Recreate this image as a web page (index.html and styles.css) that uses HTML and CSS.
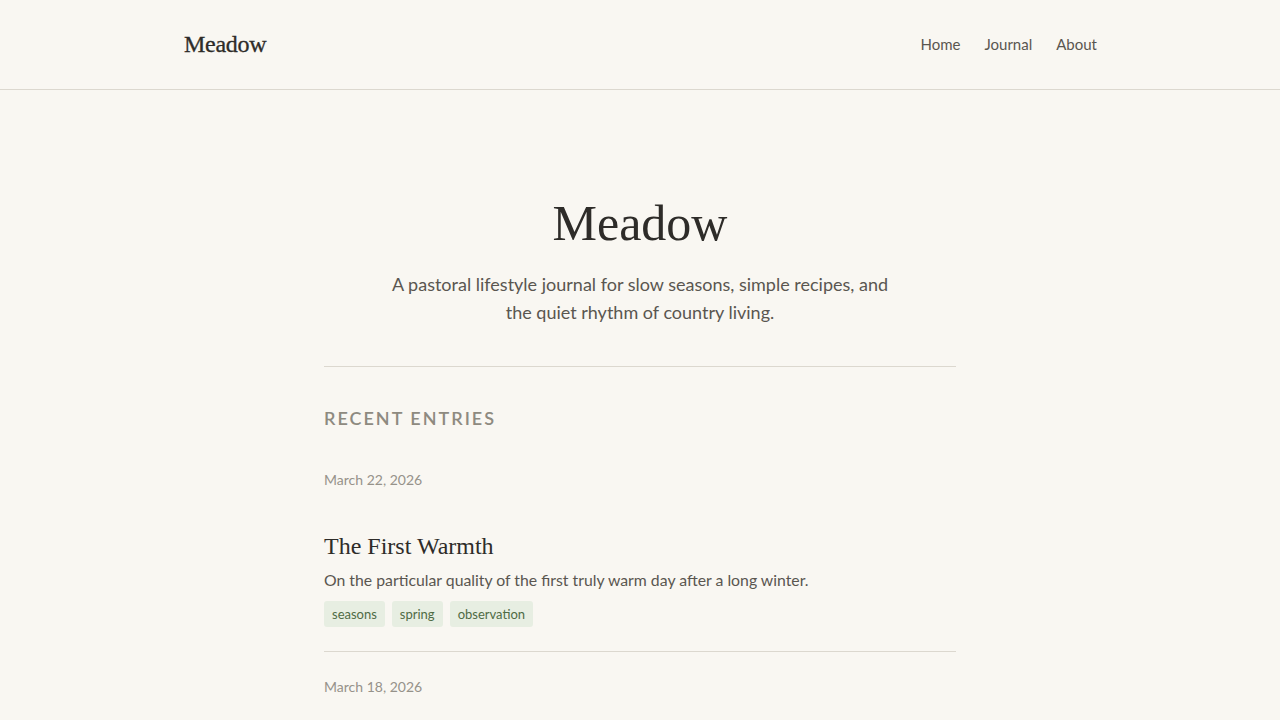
FILE: index.html
```html
<!DOCTYPE html>
<html lang="en">
<head>
    <meta charset="UTF-8">
    <meta name="viewport" content="width=device-width, initial-scale=1.0">
    <link rel="stylesheet" href="styles.css">
    <title>Meadow</title>
</head>
<body>
    <header class="site-header">
        <div class="header-inner">
            <a class="logo" href="#">Meadow</a>
            <nav class="nav">
                <a href="#">Home</a>
                <a href="#">Journal</a>
                <a href="#">About</a>
            </nav>
        </div>
    </header>
    <main class="content">
        <section class="hero">
            <h1>Meadow</h1>
            <p>A pastoral lifestyle journal for slow seasons, simple recipes, and the quiet rhythm of country living.</p>
        </section>
        <section class="entries">
            <h2>Recent Entries</h2>
            <article class="entry">
                <div class="date">March 22, 2026</div>
                <h3>The First Warmth</h3>
                <p>On the particular quality of the first truly warm day after a long winter.</p>
                <div class="tags">
                    <span class="tag">seasons</span>
                    <span class="tag">spring</span>
                    <span class="tag">observation</span>
                </div>
            </article>
            <article class="entry">
                <div class="date">March 18, 2026</div>
            </article>
        </section>
    </main>
</body>
</html>
```

FILE: styles.css
```css
body{
    margin: 0;
    background: #f9f7f2;
    color: #2e2c29;
    font-family: "Lato", "Noto Sans", sans-serif;
}
a{
    color: inherit;
    text-decoration: none;
}
.site-header{
    border-bottom: 1px solid #dcd8cf;
}
.header-inner{
    max-width: 912px;
    margin: 0 auto;
    height: 89px;
    display: flex;
    align-items: center;
    justify-content: space-between;
}
.logo{
    font-family: "Liberation Serif", serif;
    font-size: 24px;
    font-weight: 400;
    letter-spacing: -0.3px;
    color: #2e2c29;
    -webkit-text-stroke: 0.3px #2e2c29;
}
.nav{
    display: flex;
    gap: 24px;
    margin-right: -1px;
    margin-top: -2px;
}
.nav a{
    font-size: 15px;
    color: #5a5650;
}
.content{
    max-width: 632px;
    margin: 0 auto;
}
.hero{
    text-align: center;
    padding: 100px 0 40px;
    border-bottom: 1px solid #dcd8cf;
}
.hero h1{
    margin: 0;
    font-family: "Liberation Serif", serif;
    font-weight: 400;
    font-size: 50px;
    line-height: 67px;
    color: #2e2c29;
}
.hero p{
    margin: 13px auto 0;
    max-width: 510px;
    font-size: 18px;
    line-height: 28px;
    color: #5a5650;
}
.entries h2{
    margin: 39px 0 15px;
    font-size: 18px;
    line-height: 24px;
    font-weight: 600;
    text-transform: uppercase;
    letter-spacing: 2px;
    color: #8e8a80;
}
.entry{
    padding: 25px 0 24px;
    border-bottom: 1px solid #dcd8cf;
}
.entry:last-child{
    border-bottom: none;
}
.entry .date{
    font-size: 14px;
    line-height: 20px;
    color: #96928a;
}
.entry h3{
    margin: 39px 0 0;
    font-family: "Liberation Serif", serif;
    font-weight: 400;
    font-size: 24px;
    line-height: 34px;
    color: #2e2c29;
}
.entry p{
    margin: 5px 0 0;
    font-size: 15.8px;
    line-height: 24px;
    color: #5a5650;
}
.tags{
    display: flex;
    gap: 7px;
    margin-top: 9px;
}
.tag{
    background: #e7eee2;
    color: #4f6b45;
    font-size: 13px;
    line-height: 26px;
    padding: 0 8px;
    border-radius: 3px;
}
```
